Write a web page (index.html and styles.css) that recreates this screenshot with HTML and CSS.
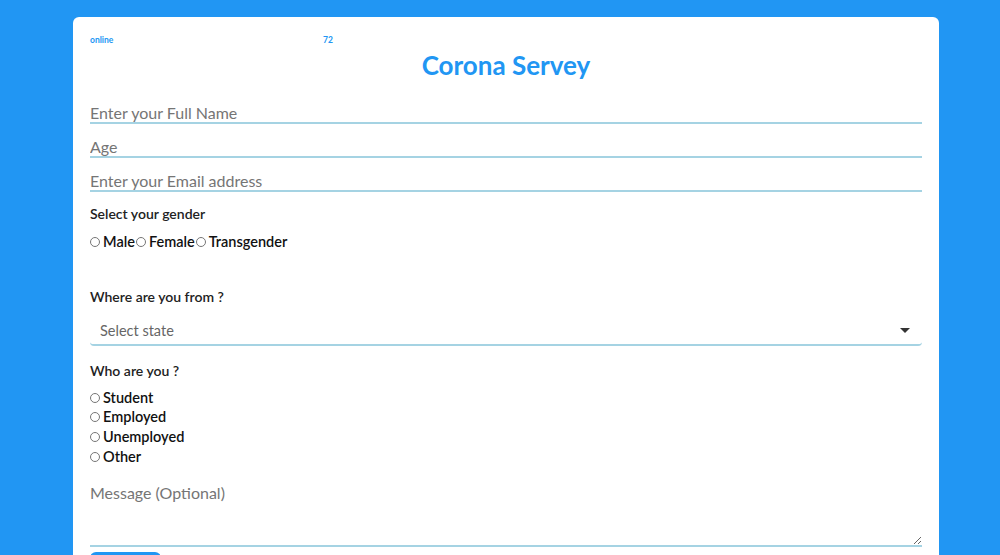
FILE: index.html
```html
<!DOCTYPE html>
<html>
<head>
<meta charset="utf-8">
<link rel="stylesheet" href="styles.css">
</head>
<body>
<div class="card">
  <div class="status">
    <span class="status-item status-first">online</span>
    <span class="status-item">72</span>
  </div>
  <h1 class="title">Corona Servey</h1>
  <form class="form">
    <input class="field" type="text" placeholder="Enter your Full Name">
    <input class="field" type="text" placeholder="Age">
    <input class="field" type="text" placeholder="Enter your Email address">
    <p class="label label-gender">Select your gender</p>
    <div class="inline-options">
      <label class="opt"><input class="radio" type="radio" name="g">Male</label>
      <label class="opt"><input class="radio" type="radio" name="g">Female</label>
      <label class="opt"><input class="radio" type="radio" name="g">Transgender</label>
    </div>
    <p class="label label-from">Where are you from ?</p>
    <div class="select">
      <span class="select-text">Select state</span>
      <span class="caret"></span>
    </div>
    <p class="label label-who">Who are you ?</p>
    <div class="stack-options">
      <label class="opt"><input class="radio" type="radio" name="w">Student</label>
      <label class="opt"><input class="radio" type="radio" name="w">Employed</label>
      <label class="opt"><input class="radio" type="radio" name="w">Unemployed</label>
      <label class="opt"><input class="radio" type="radio" name="w">Other</label>
    </div>
    <textarea class="message" placeholder="Message (Optional)"></textarea>
    <button class="submit" type="button">Submit</button>
  </form>
</div>
</body>
</html>
```
FILE: styles.css
```css
html, body {
  margin: 0;
  padding: 0;
  background: #2196f3;
  height: 100%;
  overflow: hidden;
}
body {
  font-family: Lato, "Liberation Sans", sans-serif;
}
.card {
  margin: 17px 61px 0 73px;
  background: #fff;
  border-radius: 6px 6px 0 0;
  padding: 18px 17px 40px 17px;
  min-height: 600px;
}
.status {
  display: flex;
  font-size: 8.5px;
  font-weight: 700;
  color: #2196f3;
  line-height: 10px;
}
.status-first {
  width: 233px;
}
.title {
  margin: 4px 0 0;
  text-align: center;
  color: #2196f3;
  font-size: 26px;
  font-weight: 700;
  line-height: 32px;
}
.form {
  display: flex;
  flex-direction: column;
  margin-top: 17px;
}
.field {
  display: block;
  border: none;
  border-bottom: 2px solid #a5d3e3;
  padding: 4px 0 0;
  height: 20px;
  margin: 0 0 8px;
  font-family: inherit;
  font-size: 16px;
  color: #333;
  outline: none;
  background: transparent;
}
.field::placeholder, .message::placeholder {
  color: #757575;
}
.label {
  margin: 0;
  font-size: 14px;
  font-weight: 600;
  color: #222;
  line-height: 18px;
}
.label-gender {
  margin-top: 5px;
}
.inline-options {
  display: flex;
  margin-top: 9px;
}
.opt {
  display: flex;
  align-items: center;
  font-size: 14.5px;
  font-weight: 600;
  color: #111;
  line-height: 19.7px;
}
.radio {
  width: 10px;
  height: 10px;
  margin: 0 3px 0 0;
}
.inline-options .opt {
  margin-right: 1px;
}
.label-from {
  margin-top: 36px;
}
.select {
  display: flex;
  align-items: center;
  justify-content: space-between;
  margin-top: 11px;
  height: 27px;
  border-bottom: 2px solid #a5d3e3;
  border-radius: 0 0 4px 4px;
  padding: 0 12px 0 10px;
}
.select-text {
  font-size: 14.5px;
  color: #666;
}
.caret {
  width: 0;
  height: 0;
  border-left: 5px solid transparent;
  border-right: 5px solid transparent;
  border-top: 5px solid #333;
}
.label-who {
  margin-top: 16px;
}
.stack-options {
  display: flex;
  flex-direction: column;
  margin-top: 8px;
}
.message {
  margin-top: 16px;
  height: 62px;
  border: none;
  border-bottom: 2px solid #a5d3e3;
  padding: 0;
  font-family: inherit;
  font-size: 16px;
  resize: vertical;
  outline: none;
}
.submit {
  align-self: flex-start;
  margin-top: 5px;
  background: #2196f3;
  color: #fff;
  border: none;
  border-radius: 6px;
  padding: 6px 14px;
  font-family: inherit;
  font-size: 14px;
}
```
